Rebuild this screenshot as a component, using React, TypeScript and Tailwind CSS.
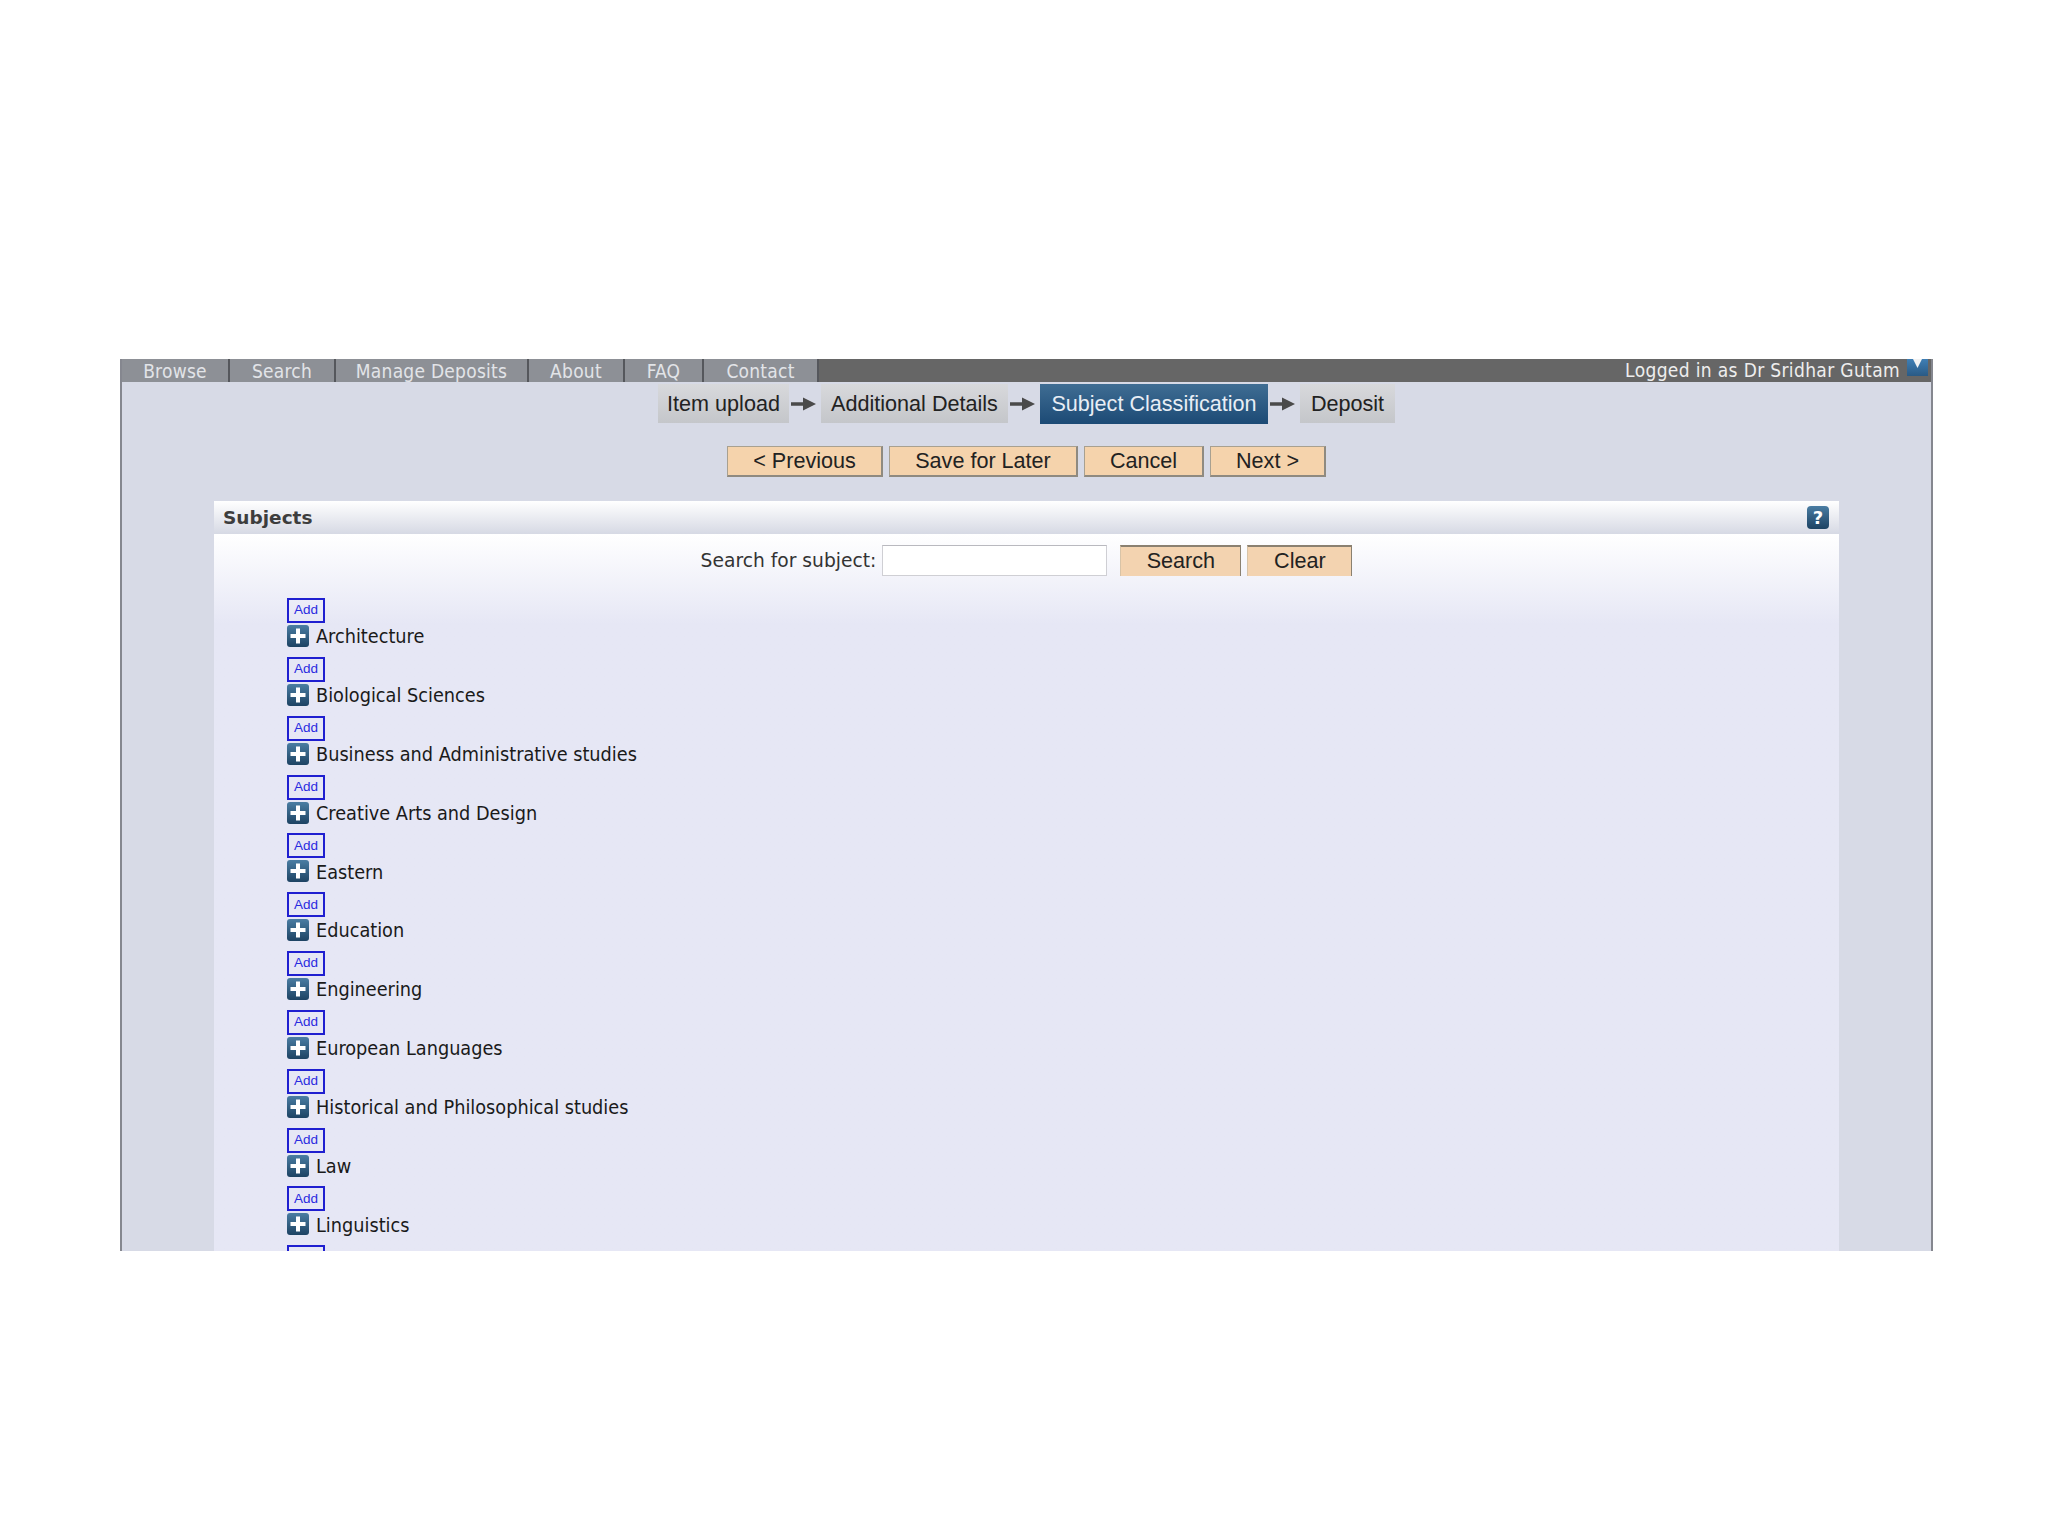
import React from "react";

const tabs = [
  { label: "Browse", w: "w-[108px]" },
  { label: "Search", w: "w-[106px]" },
  { label: "Manage Deposits", w: "w-[193px]" },
  { label: "About", w: "w-[96px]" },
  { label: "FAQ", w: "w-[79px]" },
  { label: "Contact", w: "w-[115px]" }
];

const subjects = [
  "Architecture",
  "Biological Sciences",
  "Business and Administrative studies",
  "Creative Arts and Design",
  "Eastern",
  "Education",
  "Engineering",
  "European Languages",
  "Historical and Philosophical studies",
  "Law",
  "Linguistics"
];

function Arrow() {
  return (
    <svg width="32" height="20" viewBox="0 0 32 20" className="shrink-0 self-center">
      <path d="M2 10h16" stroke="#4a4a4a" strokeWidth="3.5" />
      <path d="M14 3.5l13 6.5-13 6.5z" fill="#4a4a4a" />
    </svg>
  );
}

function Step({ label, active, w }: { label: string; active?: boolean; w: string }) {
  return (
    <div
      className={
        active
          ? `${w} h-[40px] pt-[1px] flex items-center justify-center text-[21.6px] text-[#e8eef5] bg-gradient-to-b from-[#3f6d93] to-[#1c4a75]`
          : `${w} h-[39px] pt-[1px] flex items-center justify-center text-[21.6px] text-[#222] bg-gradient-to-b from-[#d8d9dc] to-[#c4c6ca]`
      }
    >
      {label}
    </div>
  );
}

function PeachButton({ label, w }: { label: string; w: string }) {
  return (
    <button className={`${w} h-[31px] text-[21.6px] leading-none text-[#222] bg-[#f5d3ac] border-t border-l border-[#a8a090] border-r-2 border-b-2 border-r-[#8f8a80] border-b-[#8f8a80]`}>
      {label}
    </button>
  );
}

// search row buttons have a dark top edge and no bottom edge
function SearchButton({ label, w }: { label: string; w: string }) {
  return (
    <button className={`${w} h-[31px] pb-[2px] text-[21.6px] leading-none text-[#222] bg-[#f3d3b0] border-t-2 border-r border-l border-[#8a8070] border-l-[#d8c4a8]`}>
      {label}
    </button>
  );
}

function AddBox({ children }: { children?: React.ReactNode }) {
  return (
    <div className="w-[38px] h-[25px] border-2 border-[#1f1fd0] flex items-center justify-center text-[13.5px] text-[#2a2ae0] font-['Liberation_Sans',sans-serif]">
      {children}
    </div>
  );
}

function SubjectRow({ label }: { label: string }) {
  return (
    <div className="h-[58.85px] flex flex-col items-start">
      <AddBox>Add</AddBox>
      <div className="flex items-center mt-[2px] h-[22px]">
        <svg width="22" height="22" viewBox="0 0 22 22" className="shrink-0">
          <defs>
            <linearGradient id="plusFill" x1="0" y1="0" x2="0" y2="1">
              <stop offset="0" stopColor="#4a7da3" />
              <stop offset="1" stopColor="#1d4363" />
            </linearGradient>
          </defs>
          <rect width="22" height="22" rx="3" fill="url(#plusFill)" />
          <path d="M11 3.5v15M3.5 11h15" stroke="#fff" strokeWidth="4" />
        </svg>
        <span className="ml-[7px] mt-[2px] text-[19.7px] text-[#1a1a1a] whitespace-nowrap font-['DejaVu_Sans_Condensed','DejaVu_Sans',sans-serif]">{label}</span>
      </div>
    </div>
  );
}

export default function App() {
  return (
    <div className="min-h-[1536px] bg-white pt-[359px] font-['DejaVu_Sans',sans-serif]">
      <div className="mx-[120px] w-[1813px] h-[892px] overflow-hidden bg-[#d7dae6] border-x-2 border-[#85878f] flex flex-col">
        {/* top nav */}
        <div className="h-[23px] shrink-0 bg-[#666] flex items-stretch font-['DejaVu_Sans_Condensed','DejaVu_Sans',sans-serif]">
          {tabs.map((t) => (
            <div
              key={t.label}
              className={`${t.w} shrink-0 flex items-center justify-center text-[19px] leading-[22px] tracking-[0.25px] text-[#e2e4e8] bg-[#8d9096] border-r-2 border-[#55575c] last:border-r-0`}
            >
              {t.label}
            </div>
          ))}
          <div className="flex-1 flex items-start justify-end">
            <span className="text-[19px] leading-[22px] tracking-[0.35px] mr-[7px] text-[#eee] whitespace-nowrap">Logged in as Dr Sridhar Gutam</span>
            <svg width="21" height="17" viewBox="0 0 21 17" className="shrink-0 mr-[3px]">
              <defs>
                <linearGradient id="logoFill" x1="0" y1="0" x2="0" y2="1">
                  <stop offset="0" stopColor="#3f7fb5" />
                  <stop offset="1" stopColor="#2a5a85" />
                </linearGradient>
              </defs>
              <rect width="21" height="17" fill="url(#logoFill)" />
              <path d="M6 0h9l-4.5 9z" fill="#f2f2f2" />
            </svg>
          </div>
        </div>

        {/* steps */}
        <div className="flex justify-center items-start font-['Liberation_Sans',sans-serif] mt-[2px]">
          <Step label="Item upload" w="w-[131px]" />
          <Arrow />
          <Step label="Additional Details" w="w-[187px]" />
          <Arrow />
          <Step label="Subject Classification" w="w-[228px]" active />
          <Arrow />
          <Step label="Deposit" w="w-[95px]" />
        </div>

        {/* actions */}
        <div className="flex justify-center gap-[6px] mt-[22px] font-['Liberation_Sans',sans-serif]">
          <PeachButton label="< Previous" w="w-[156px]" />
          <PeachButton label="Save for Later" w="w-[189px]" />
          <PeachButton label="Cancel" w="w-[120px]" />
          <PeachButton label="Next >" w="w-[116px]" />
        </div>

        {/* subjects panel */}
        <div className="mx-[92px] mt-[24px] flex-1 flex flex-col">
          <div className="h-[33px] shrink-0 flex items-center justify-between pl-[9px] pr-[10px] bg-gradient-to-b from-white to-[#d6d9e4]">
            <span className="text-[18.5px] font-bold text-[#3d3d3d]">Subjects</span>
            <div className="w-[22px] h-[23px] rounded-[4px] bg-gradient-to-b from-[#4a7da3] to-[#1d4363] flex items-center justify-center text-[18px] font-bold leading-none text-white">
              ?
            </div>
          </div>
          <div className="flex-1 bg-gradient-to-b from-white to-[#e6e7f5] to-[90px] pl-[73px]">
            <div className="-ml-[73px] h-[64px] flex items-center justify-center pb-[11px]">
              <span className="text-[18.7px] mt-[1px] text-[#333] whitespace-nowrap">Search for subject:</span>
              <input className="ml-[6px] w-[225px] h-[31px] bg-white border border-[#cfcfd4] border-t-[#b9b9bf]" />
              <div className="flex gap-[6px] ml-[13px] font-['Liberation_Sans',sans-serif]">
                <SearchButton label="Search" w="w-[121px]" />
                <SearchButton label="Clear" w="w-[105px]" />
              </div>
            </div>
            {subjects.map((s) => (
              <SubjectRow key={s} label={s} />
            ))}
            <AddBox />
          </div>
        </div>
      </div>
    </div>
  );
}
